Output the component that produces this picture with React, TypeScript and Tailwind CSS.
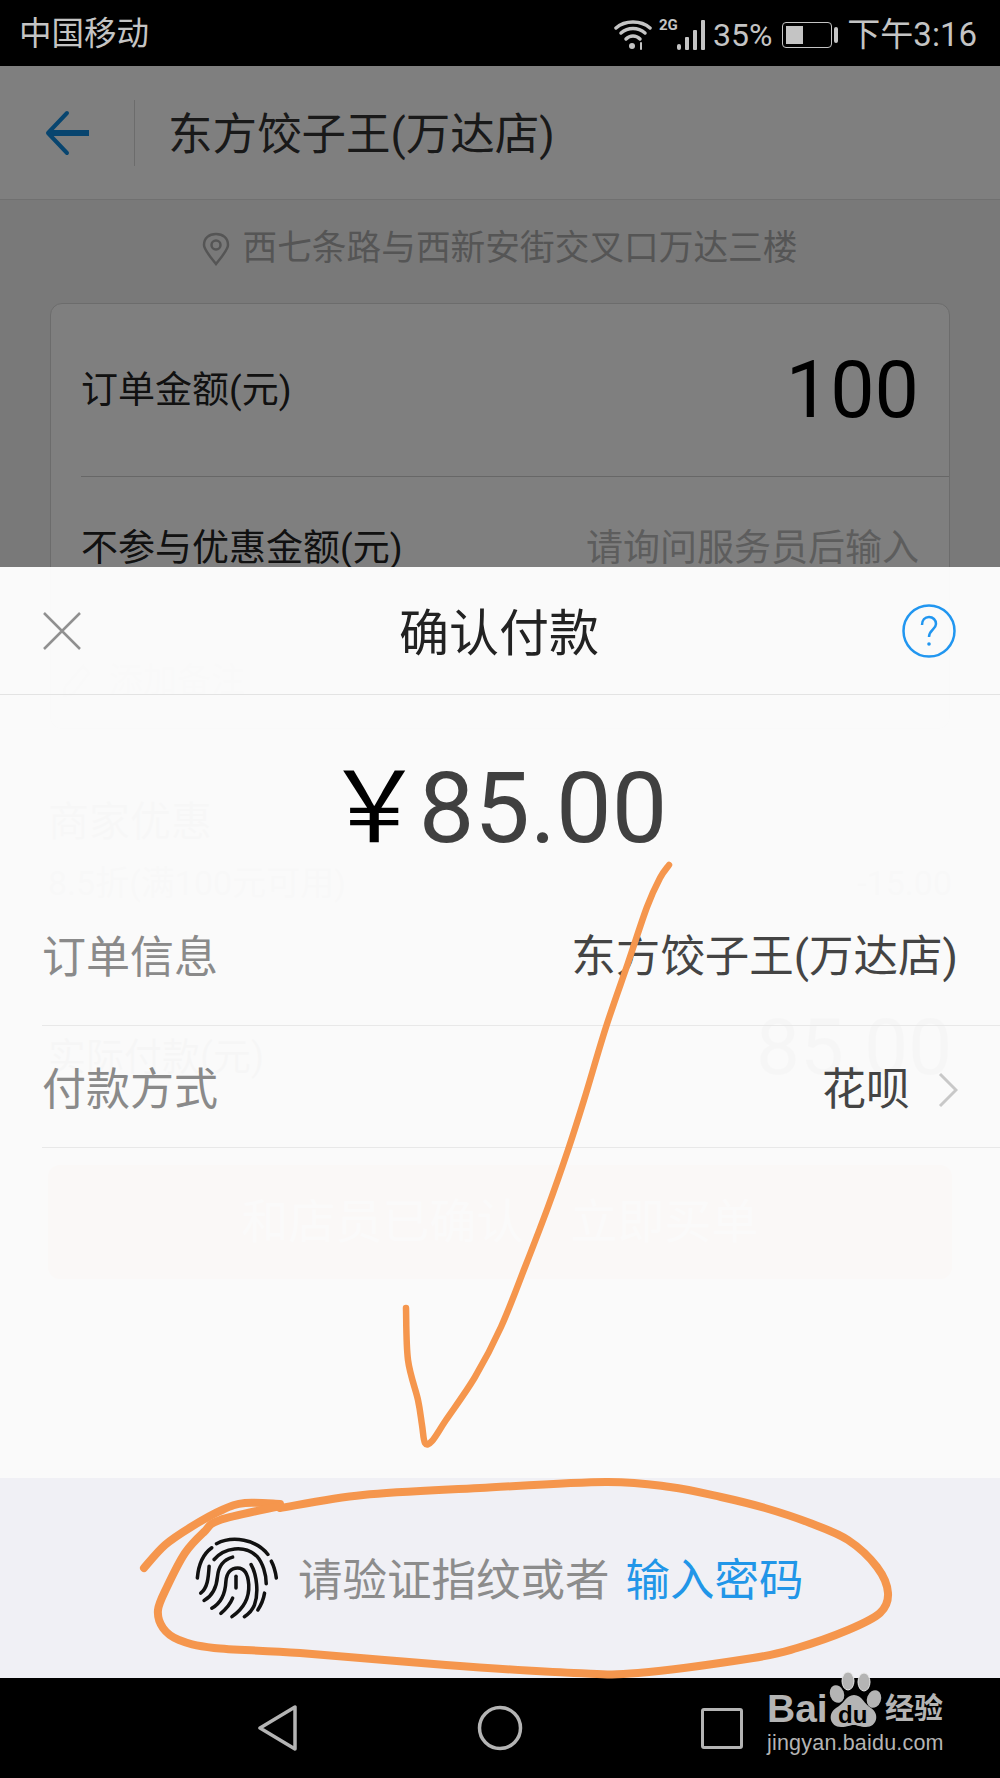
type Pt = [number, number];

// hand drawn marks on top of the screenshot, given as points in page pixels
const checkMark: Pt[] = [
  [669, 865], [660, 878], [647, 907], [628, 963], [606, 1027], [584, 1100], [568, 1150], [548, 1207],
  [525, 1267], [501, 1327], [475, 1377], [446, 1420], [432, 1441], [425, 1443], [422, 1425], [418, 1400],
  [408, 1360], [406, 1308],
];

const circleStart: Pt[] = [
  [144, 1568], [165, 1545], [191, 1527], [222, 1510], [245, 1503], [280, 1504],
];

const circleLoop: Pt[] = [
  [280, 1508], [363, 1495], [480, 1488], [606, 1482], [670, 1487], [721, 1497], [765, 1508], [810, 1523],
  [848, 1540], [877, 1567], [888, 1593], [880, 1613], [848, 1630], [797, 1648], [753, 1658], [638, 1673],
  [574, 1673], [446, 1665], [300, 1653], [214, 1648], [179, 1640], [163, 1628], [158, 1610], [167, 1587],
  [185, 1553], [204, 1532], [220, 1520], [280, 1506],
];

function smooth(points: Pt[]) {
  let d = `M${points[0][0]} ${points[0][1]}`;
  for (let i = 0; i < points.length - 1; i++) {
    const p0 = points[Math.max(i - 1, 0)];
    const p1 = points[i];
    const p2 = points[i + 1];
    const p3 = points[Math.min(i + 2, points.length - 1)];
    const c1x = p1[0] + (p2[0] - p0[0]) / 6;
    const c1y = p1[1] + (p2[1] - p0[1]) / 6;
    const c2x = p2[0] - (p3[0] - p1[0]) / 6;
    const c2y = p2[1] - (p3[1] - p1[1]) / 6;
    d += `C${c1x} ${c1y} ${c2x} ${c2y} ${p2[0]} ${p2[1]}`;
  }
  return d;
}

function StatusIcons() {
  return (
    <div className="flex items-center">
      {/* wifi */}
      <svg width="38" height="32" viewBox="0 0 38 32" fill="none" stroke="#c4c4c4" strokeWidth="3.5" strokeLinecap="round">
        <path d="M2 9C11 1 27 1 36 9" />
        <path d="M7 14C14 8 24 8 31 14" />
        <path d="M12 20C16 16 22 16 26 20" />
        <circle cx="18" cy="27" r="3" fill="#c4c4c4" stroke="none" />
        <path d="M27 24v6" strokeWidth="2" />
      </svg>
      <div className="relative w-[58px] h-[32px] ml-[8px]">
        <span className="absolute left-[-1px] top-[-3px] text-[15px] leading-[18px] font-bold text-[#c4c4c4]">2G</span>
        <svg className="absolute left-[16px] top-0" width="34" height="32" viewBox="0 0 34 32" fill="#c4c4c4">
          <rect x="1" y="25" width="4" height="6" rx="2" />
          <rect x="9" y="18" width="4" height="13" rx="1" />
          <rect x="17" y="11" width="4" height="20" rx="1" />
          <rect x="25" y="1" width="4" height="30" rx="1" />
        </svg>
      </div>
      <span className="text-[32px] leading-none text-[#c4c4c4] ml-[-5px]">35%</span>
      {/* battery */}
      <div className="flex items-center ml-[10px]">
        <div className="w-[50px] h-[26px] rounded-[4px] border border-[#c4c4c4] p-[3px]">
          <div className="w-[17px] h-full bg-[#c4c4c4]" />
        </div>
        <div className="w-[4px] h-[16px] ml-[2px] rounded-[2px] bg-[#c4c4c4]" />
      </div>
      <span className="text-[33px] leading-none text-[#c4c4c4] ml-[9px]">下午3:16</span>
    </div>
  );
}

function Fingerprint() {
  return (
    <svg width="84" height="84" viewBox="78 80 250 250" fill="none" stroke="#111" strokeWidth="10.5" strokeLinecap="round">
      <path d="M142 103C190 78 260 90 295 135" />
      <path d="M128 115C100 135 88 170 85 205" />
      <path d="M135 150C165 115 225 105 262 140C280 160 290 195 290 222" />
      <path d="M305 155C313 170 318 190 320 205" />
      <path d="M120 170C118 205 115 235 95 250" />
      <path d="M105 272C130 258 142 235 145 200C148 170 165 150 190 143" />
      <path d="M245 165C262 195 268 250 255 285C248 303 238 312 225 320" />
      <path d="M128 295C155 280 168 255 170 215C172 190 185 175 205 175C225 175 236 195 238 225C240 265 225 295 188 320" />
      <path d="M200 200V235" />
      <path d="M155 310C170 298 182 285 190 265" />
      <path d="M265 300C275 285 282 268 285 250" />
    </svg>
  );
}

function NavIcons() {
  return (
    <div className="h-[100px] bg-black flex items-center pl-[258px]">
      <svg width="40" height="46" viewBox="0 0 40 46" fill="none" stroke="#b4b4b4" strokeWidth="3.5" strokeLinejoin="round">
        <path d="M37 2V44L2 23Z" />
      </svg>
      <svg className="ml-[179px]" width="46" height="46" viewBox="0 0 46 46" fill="none" stroke="#b4b4b4" strokeWidth="3.5">
        <circle cx="23" cy="23" r="20.5" />
      </svg>
      <div className="ml-[178px] w-[42px] h-[41px] rounded-[3px] border-[3.5px] border-[#b4b4b4]" />
    </div>
  );
}

function Watermark() {
  return (
    <div className="absolute left-[766px] top-[1670px] w-[190px] h-[90px] text-[#b4b4b4]">
      <span className="absolute left-[1px] top-[17px] text-[39px] leading-[44px] font-bold font-['Liberation_Sans',sans-serif]">Bai</span>
      <svg className="absolute left-[58px] top-0" width="62" height="58" viewBox="0 0 62 58" fill="#b4b4b4">
        <ellipse cx="24" cy="11" rx="6" ry="9" stroke="#e8e8e8" strokeWidth="1" />
        <ellipse cx="40" cy="12" rx="6" ry="9" stroke="#e8e8e8" strokeWidth="1" />
        <ellipse cx="13" cy="24" rx="7" ry="9" transform="rotate(-20 13 24)" />
        <ellipse cx="50" cy="29" rx="7" ry="9" transform="rotate(20 50 29)" />
        <path d="M30 25C38 25 40 34 47 38C56 44 53 57 42 57C36 57 33 55 30 55C26 55 24 57 17 57C6 57 3 44 12 38C20 34 22 25 30 25Z" />
      </svg>
      <span className="absolute left-[72px] top-[33px] text-[24px] leading-[24px] font-bold text-black font-['Liberation_Sans',sans-serif]">du</span>
      <span className="absolute left-[119px] top-[19px] text-[29px] leading-[40px] font-bold">经验</span>
      <span className="absolute left-[1px] top-[59px] text-[21.5px] leading-[28px] font-['Liberation_Sans',sans-serif] tracking-[0.2px] whitespace-nowrap">jingyan.baidu.com</span>
    </div>
  );
}

// the order page that sits behind the dimmed layer
function OrderPage() {
  return (
    <div className="flex flex-col">
      <div className="h-[134px] bg-white border-b border-[#e0e0e0] flex items-center">
        <svg className="ml-[45px]" width="46" height="46" viewBox="0 0 46 46" fill="none" stroke="#118bdf" strokeLinecap="round">
          <path d="M22 3L3 23L22 43" strokeWidth="4" strokeLinejoin="round" />
          <path d="M4 23H44" strokeWidth="6" strokeLinecap="butt" />
        </svg>
        <div className="w-px h-[66px] bg-[#d8d8d8] ml-[43px]" />
        <span className="ml-[33px] pt-[6px] text-[44.5px] leading-none text-[#333]">东方饺子王(万达店)</span>
      </div>
      <div className="h-[103px] flex items-center justify-center pb-[6px] text-[34.7px] text-[#aaa]">
        <svg width="28" height="34" viewBox="0 0 28 34" fill="none" stroke="#aaa" strokeWidth="2.5">
          <path d="M14 32C8 24 2 18 2 13C2 6 7 2 14 2C21 2 26 6 26 13C26 18 20 24 14 32Z" />
          <circle cx="14" cy="13" r="4.5" />
        </svg>
        <span className="ml-[12px]">西七条路与西新安街交叉口万达三楼</span>
      </div>
      <div className="mx-[50px] h-[426px] rounded-[12px] bg-white border border-[#d8d8d8] pl-[30px]">
        <div className="h-[173px] border-b border-[#cfcfcf] flex items-center justify-between pr-[30px]">
          <span className="pt-[2px] text-[37px] text-[#222]">订单金额(元)</span>
          <span className="text-[79px] leading-none text-black">100</span>
        </div>
        <div className="h-[142px] flex items-center justify-between pr-[30px]">
          <span className="pt-[2px] text-[37px] text-[#222]">不参与优惠金额(元)</span>
          <span className="pt-[2px] text-[37px] text-[#bbb]">请询问服务员后输入</span>
        </div>
        <div className="mt-[36px] ml-[-20px] flex items-center text-[#bbb] text-[34px]">
          <svg width="30" height="36" viewBox="0 0 30 36" fill="none" stroke="#bbb" strokeWidth="2.5">
            <path d="M22 3L4 24L3 33L12 31L28 10Z" />
          </svg>
          <span className="ml-[18px]">添加备注</span>
        </div>
      </div>
      <div className="mx-[48px] mt-[69px]">
        <div className="text-[41px] leading-[48px] text-[#666]">商家优惠</div>
        <div className="mt-[13px] flex items-center justify-between text-[34px] leading-[48px] text-[#888]">
          <span>8.5折(满100元可用)</span>
          <span>-15.00</span>
        </div>
        <div className="mt-[102px] flex items-center justify-between">
          <span className="pt-[18px] text-[38px] text-[#333]">实际付款(元)</span>
          <span className="text-[78px] leading-none text-[#333]">85.00</span>
        </div>
      </div>
      <div className="mx-[48px] mt-[78px] h-[114px] rounded-[12px] bg-[#ff8a4a] flex items-center justify-center text-[47px] text-white">
        和店员已确认，立即买单
      </div>
    </div>
  );
}

function PaySheet() {
  return (
    <div className="absolute left-0 right-0 top-[501px] bottom-0 flex flex-col bg-[#fefefe]/[0.97]">
      <div className="h-[128px] shrink-0 border-b border-[#e3e3e3] flex items-center justify-between pl-[42px] pr-[44px]">
        <div className="w-[54px]">
          <svg width="40" height="40" viewBox="0 0 40 40" stroke="#909090" strokeWidth="2.5">
            <path d="M2 2L38 38M38 2L2 38" />
          </svg>
        </div>
        <span className="pt-[6px] text-[50px] leading-none text-[#222]">确认付款</span>
        <svg width="54" height="54" viewBox="0 0 54 54" fill="none" stroke="#2196f0">
          <circle cx="27" cy="27" r="25.5" strokeWidth="2.5" />
          <path d="M20 21C20 16 23 13 27 13C31 13 34 16 34 20C34 25 27 26 27 33" strokeWidth="2.5" />
          <circle cx="27" cy="40" r="1.8" fill="#2196f0" stroke="none" />
        </svg>
      </div>
      <div className="flex-1 pl-[42px]">
        <div className="h-[195px] flex items-start justify-center pt-[47px] pr-[50px] text-[99px] leading-[132px] text-[#404040] whitespace-nowrap">
          <span className="text-black">￥</span>
          <span className="ml-[-5px]">85.00</span>
        </div>
        <div className="h-[136px] border-b border-[#e8e8e8] flex items-center justify-between pr-[42px] text-[44px]">
          <span className="text-[#8a8a8a]">订单信息</span>
          <span className="text-[44.5px] text-[#444]">东方饺子王(万达店)</span>
        </div>
        <div className="h-[122px] border-b border-[#e8e8e8] flex items-center justify-between pr-[42px] pt-[6px] text-[44px]">
          <span className="text-[#8a8a8a]">付款方式</span>
          <div className="flex items-center">
            <span className="text-[#444]">花呗</span>
            <svg className="ml-[28px]" width="20" height="36" viewBox="0 0 20 36" fill="none" stroke="#c8c8c8" strokeWidth="3">
              <path d="M2 2L18 18L2 34" />
            </svg>
          </div>
        </div>
      </div>
      <div className="h-[200px] shrink-0 bg-[#f0f0f5] flex items-center pl-[195px] text-[44.5px]">
        <Fingerprint />
        <span className="ml-[19px] pt-[6px] text-[#8c8c8c]">请验证指纹或者</span>
        <span className="ml-[16px] pt-[6px] text-[#2196e8]">输入密码</span>
      </div>
    </div>
  );
}

export default function App() {
  return (
    <div className="relative w-[1000px] h-[1778px] overflow-hidden flex flex-col bg-black font-['Roboto','Noto_Sans_CJK_SC',sans-serif]">
      <div className="h-[66px] shrink-0 bg-black flex items-center justify-between pl-[19px] pr-[23px] pt-[3px]">
        <span className="text-[32.5px] leading-none text-[#c4c4c4]">中国移动</span>
        <StatusIcons />
      </div>
      <div className="relative flex-1 overflow-hidden bg-[#f2f2f2]">
        <OrderPage />
        <div className="absolute inset-0 bg-black/50" />
        <PaySheet />
      </div>
      <NavIcons />
      <Watermark />
      <svg className="absolute inset-0" width="1000" height="1778" viewBox="0 0 1000 1778" fill="none" stroke="#f5964d" strokeLinecap="round" strokeLinejoin="round">
        <path d={smooth(checkMark)} strokeWidth="6.5" />
        <path d={smooth(circleStart)} strokeWidth="8" />
        <path d={smooth(circleLoop)} strokeWidth="8" />
      </svg>
    </div>
  );
}
